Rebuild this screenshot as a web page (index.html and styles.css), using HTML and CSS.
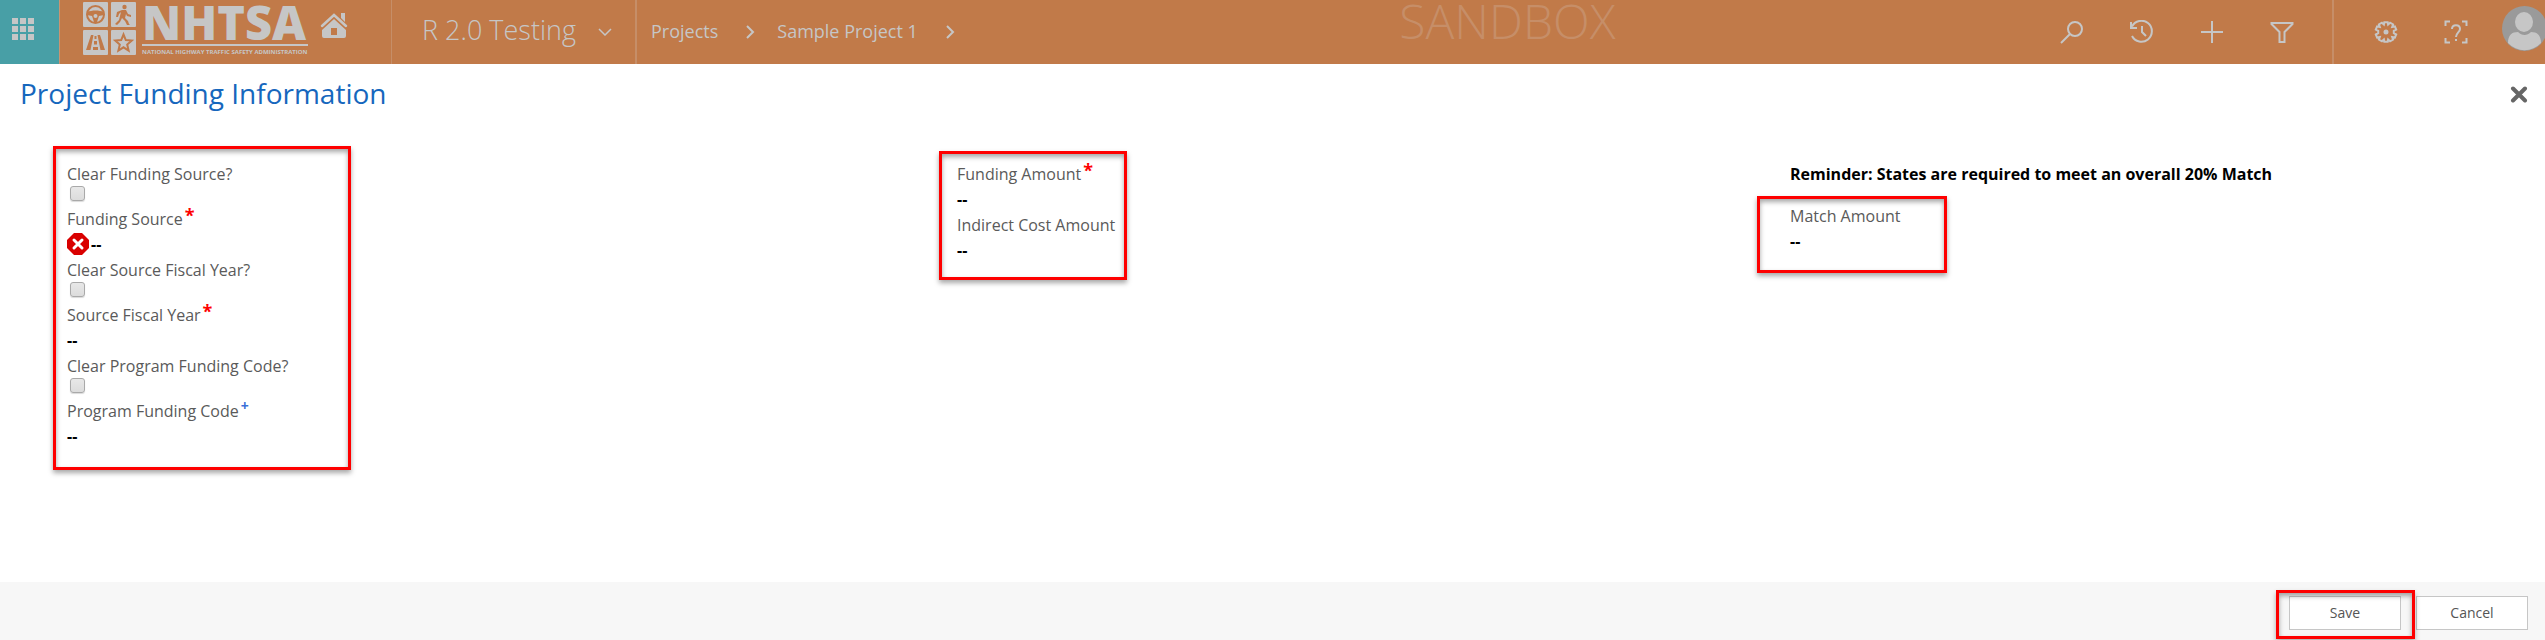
FILE: index.html
```html
<!DOCTYPE html>
<html lang="en">
<head>
<meta charset="utf-8">
<title>Project Funding Information</title>
<link rel="stylesheet" href="styles.css">
</head>
<body>
<header class="topbar">
  <button class="launcher" type="button" aria-label="Apps">
    <svg width="22" height="22" viewBox="0 0 22 22" fill="currentColor"><path d="M0 0h6v6H0zM8 0h6v6H8zM16 0h6v6h-6zM0 8h6v6H0zM8 8h6v6H8zM16 8h6v6h-6zM0 16h6v6H0zM8 16h6v6H8zM16 16h6v6h-6z"/></svg>
  </button>
  <a class="logo" href="#" aria-label="Home">
    <svg class="logo-tiles" width="53" height="53" viewBox="0 0 53 53">
      <g fill="#c6c6c6"><rect width="25" height="25" rx="1"/><rect x="28" width="25" height="25" rx="1"/><rect y="28" width="25" height="25" rx="1"/><rect x="28" y="28" width="25" height="25" rx="1"/></g>
      <g fill="none" stroke="#c17a49" stroke-width="2"><circle cx="12.500" cy="12.500" r="8.500"/><path d="M40.500 32.500l2.300 5.600 6 .5-4.600 4 1.400 5.900-5.100-3.200-5.100 3.200 1.400-5.900-4.600-4 6-.5z"/></g>
      <g fill="#c17a49"><path d="M4 10c5-2 12-2 17 0v3l-5 1-2 6h-3l-2-6-5-1z"/><circle cx="41.500" cy="5" r="2.200"/><path d="M39 8h4l2 4 3 1v2l-4-1-1-2-1 4 3 3 1 3 1 1h-3l-2-4-3-3-2 4-3 3-2-1 4-4 2-8-2 2-1 3h-2l1-5z"/><path d="M8 33h2.500L7.500 48H3zM14.500 33H17l5 15h-4.500zM11.500 34h2v3h-2zM11 39h3v3.500h-3zM10 45h5v3h-5z"/></g>
      <circle cx="12.500" cy="14" r="2" fill="#c6c6c6"/>
    </svg>
    <span class="logo-words">
      <span class="logo-name">NHTSA</span>
      <span class="logo-sub">NATIONAL HIGHWAY TRAFFIC SAFETY ADMINISTRATION</span>
    </span>
    <svg class="logo-home" width="28" height="27" viewBox="0 0 28 27"><path d="M2 14L14 3l12 11" fill="none" stroke="#c6c6c6" stroke-width="2.500" stroke-linecap="round"/><path d="M21 1h4v9l-4-4z" fill="#c6c6c6"/><path fill="#c6c6c6" fill-rule="evenodd" d="M14 7l12 11v6q0 2-2 2H4q-2 0-2-2v-6zM11 16v7h6v-7z"/></svg>
  </a>
  <button class="area" type="button">R 2.0 Testing
    <svg width="14" height="8" viewBox="0 0 14 8" fill="none" stroke="currentColor" stroke-width="1.500"><path d="M1 1l6 6 6-6"/></svg>
  </button>
  <nav class="crumbs">
    <a href="#">Projects</a>
    <svg width="9" height="14" viewBox="0 0 9 14" fill="none" stroke="currentColor" stroke-width="2"><path d="M1 1l6 6-6 6"/></svg>
    <a href="#">Sample Project 1</a>
    <svg width="9" height="14" viewBox="0 0 9 14" fill="none" stroke="currentColor" stroke-width="2"><path d="M1 1l6 6-6 6"/></svg>
  </nav>
  <span class="environment">SANDBOX</span>
  <div class="tools">
    <button type="button" aria-label="Search"><svg width="24" height="24" viewBox="0 0 24 24"><circle cx="15" cy="9" r="7"/><path d="M10 14l-9 9"/></svg></button>
    <button type="button" aria-label="Recent"><svg width="24" height="24" viewBox="0 0 24 24"><path d="M2 6.500A10.500 10.500 0 1 1 2 16M1 2v6h6M12 6v6l4 4"/></svg></button>
    <button type="button" aria-label="New"><svg width="24" height="24" viewBox="0 0 24 24"><path d="M12 1v22M1 12h22"/></svg></button>
    <button type="button" aria-label="Advanced find"><svg width="24" height="24" viewBox="0 0 24 24"><path d="M1.500 3h21v1l-8 8v10h-5V12l-8-8z"/></svg></button>
  </div>
  <div class="tools account">
    <button type="button" aria-label="Settings"><svg width="24" height="24" viewBox="0 0 24 24"><path d="M10.300 2.200h3.400l.4 2.400 2-1.900 3 1.700-.9 2.600 2.700-.6 1.300 3.100-2.400 1.300v2.400l2.400 1.300-1.300 3.100-2.700-.6.900 2.600-3 1.700-2-1.900-.4 2.400h-3.400l-.4-2.400-2 1.900-3-1.700.9-2.600-2.700.6-1.300-3.100 2.400-1.300v-2.400L1.800 9.500l1.300-3.100 2.700.6-.9-2.600 3-1.700 2 1.900z"/><circle cx="12" cy="12" r="1.500" fill="currentColor"/></svg></button>
    <button type="button" aria-label="Help"><svg width="24" height="24" viewBox="0 0 24 24"><path d="M1.500 6V1.500H6M18 1.500h4.500V6M22.500 18v4.500H18M6 22.500H1.500V18M8 9c0-5 8-5 8 0 0 3-4 4-4 8M12 19v2"/></svg></button>
    <svg class="avatar" width="45" height="45" viewBox="0 0 45 45"><circle cx="22.500" cy="22.500" r="22.500" fill="#9a9a9a"/><path d="M6 37c0-8 4-11 10-11 4 4 9 4 13 0 6 0 10 3 10 11a22.500 22.500 0 0 1-33 0z" fill="#c6c6c6"/><ellipse cx="22" cy="16" rx="9" ry="10" fill="#c6c6c6"/></svg>
  </div>
</header>
<div class="titlebar">
  <h1>Project Funding Information</h1>
  <button class="close" type="button" aria-label="Close"><svg width="18" height="17" viewBox="0 0 18 17"><path d="M3 2.500l12 12M15 2.500l-12 12" stroke="#666" stroke-width="4" stroke-linecap="round"/></svg></button>
</div>
<main class="form">
  <section class="source callout">
    <label for="c1">Clear Funding Source?</label>
    <input id="c1" type="checkbox">
    <div class="label">Funding Source<sup>*</sup></div>
    <div class="value"><svg width="22" height="22" viewBox="0 0 22 22"><path d="M7 0h8l7 7v8l-7 7H7l-7-7V7z" fill="#d90000"/><path d="M7 7l8 8M15 7l-8 8" stroke="#fff" stroke-width="3" stroke-linecap="round"/></svg>--</div>
    <label for="c2">Clear Source Fiscal Year?</label>
    <input id="c2" type="checkbox">
    <div class="label">Source Fiscal Year<sup>*</sup></div>
    <div class="value">--</div>
    <label for="c3">Clear Program Funding Code?</label>
    <input id="c3" type="checkbox">
    <div class="label">Program Funding Code<sup class="recommended">+</sup></div>
    <div class="value">--</div>
  </section>
  <section class="amounts callout">
    <div class="label">Funding Amount<sup>*</sup></div>
    <div class="value">--</div>
    <div class="label">Indirect Cost Amount</div>
    <div class="value">--</div>
  </section>
  <section class="matching">
    <p class="reminder">Reminder: States are required to meet an overall 20% Match</p>
    <div class="match callout">
      <div class="label">Match Amount</div>
      <div class="value">--</div>
    </div>
  </section>
</main>
<footer class="actions">
  <div class="save"><button type="button">Save</button></div>
  <button type="button">Cancel</button>
</footer>
</body>
</html>
```
FILE: styles.css
```css
* { box-sizing: border-box; }
body {
  margin: 0;
  min-height: 100vh;
  display: flex;
  flex-direction: column;
  background: #fff;
  color: #000;
  font: 16px/24px "Open Sans", "Noto Sans", sans-serif;
  overflow-x: hidden;
}
button { font: inherit; color: inherit; background: none; border: 0; padding: 0; }
a { color: inherit; text-decoration: none; }
svg { display: block; flex: none; }

.topbar {
  display: flex;
  height: 64px;
  background: #c17a49;
  color: #c6c6c6;
}
.launcher {
  width: 60px;
  padding: 18px 12px;
  display: flex;
  background: #489fa6;
  border-right: 1px solid #c79573;
}
.logo {
  display: flex;
  gap: 6px;
  padding: 2px 43px 0 23px;
  border-right: 1px solid #c68e68;
}
.logo-words { display: flex; flex-direction: column; width: 166px; white-space: nowrap; }
.logo-name { font: 800 47px/40px "Open Sans", sans-serif; padding-bottom: 2px; border-bottom: 2px solid #c6c6c6; }
.logo-sub { font: 700 6px/12px "Open Sans", sans-serif; }
.logo-home { margin: 10px 0 0 6px; }
.area {
  display: flex;
  align-items: center;
  gap: 22px;
  padding: 0 23px 4px 30px;
  font-size: 27px;
  font-weight: 300;
  border-right: 2px solid #c68e68;
}
.area svg, .crumbs svg { margin-top: 3px; }
.crumbs { display: flex; align-items: center; gap: 26px; padding: 0 0 3px 14px; font-size: 18px; white-space: nowrap; }
.crumbs a + svg { margin-left: 2px; }
.crumbs svg + a { margin-left: -4px; }
.environment { margin: 0 auto; font-size: 48px; line-height: 42px; font-weight: 300; color: #c68e68; }
.tools { display: flex; align-items: center; gap: 46px; padding-right: 38px; }
.tools svg { fill: none; stroke: currentColor; stroke-width: 2; }
.tools.account { border-left: 2px solid #c68e68; padding: 0 0 0 40px; }
.tools .avatar { stroke: none; margin: 0 -2px 7px -12px; }

.titlebar { display: flex; justify-content: space-between; align-items: center; height: 60px; padding: 0 17px 0 20px; }
h1 { margin: 0; padding-bottom: 2px; font-size: 28px; line-height: 40px; font-weight: 400; color: #1667bd; }

.form {
  flex: 1;
  display: grid;
  grid-template-columns: 886fr 818fr 788fr;
  align-items: start;
  padding: 22px 0 0 53px;
}
.callout {
  border: 3px solid #fe0000;
  box-shadow: 0 3px 5px rgba(0, 0, 0, .35), inset 0 3px 5px rgba(0, 0, 0, .35);
}
.source { min-width: 298px; justify-self: start; padding: 13px 11px 17px; }
.amounts { min-width: 188px; justify-self: start; margin-top: 5px; padding: 8px 0 13px 15px; }
.matching { padding-top: 16px; }
.reminder { margin: 0 0 10px 33px; font-weight: 700; }
.match { width: 190px; padding: 5px 0 15px 30px; }
.callout label, .label { display: block; color: #5a5a5a; white-space: nowrap; }
.value { display: flex; align-items: center; gap: 2px; height: 27px; padding-bottom: 2px; font-weight: 700; }
sup { margin-left: 2px; font-size: 18px; line-height: 0; font-weight: 700; color: #fe0000; vertical-align: 3px; }
sup.recommended { font-size: 14px; color: #3a6fd8; vertical-align: 6px; }
input[type="checkbox"] {
  appearance: none;
  display: block;
  width: 15px;
  height: 15px;
  margin: 0 0 6px 3px;
  border: 1px solid #a9a9a9;
  border-radius: 3px;
  background: linear-gradient(#e8e8e8, #dcdcdc);
  box-shadow: 0 1px 1px rgba(0, 0, 0, .15);
}

.actions { display: flex; justify-content: flex-end; gap: 15px; padding: 14px 17px 10px; background: #f7f7f7; }
.actions button { width: 112px; height: 34px; border: 1px solid #c6c6c6; background: #fff; color: #555; font-size: 14px; }
.save { position: relative; }
.save::after {
  content: "";
  position: absolute;
  inset: -6px -14px -9px -13px;
  border: 3px solid #fe0000;
  box-shadow: 0 3px 5px rgba(0, 0, 0, .3), inset 0 3px 5px rgba(0, 0, 0, .35);
  pointer-events: none;
}
```
